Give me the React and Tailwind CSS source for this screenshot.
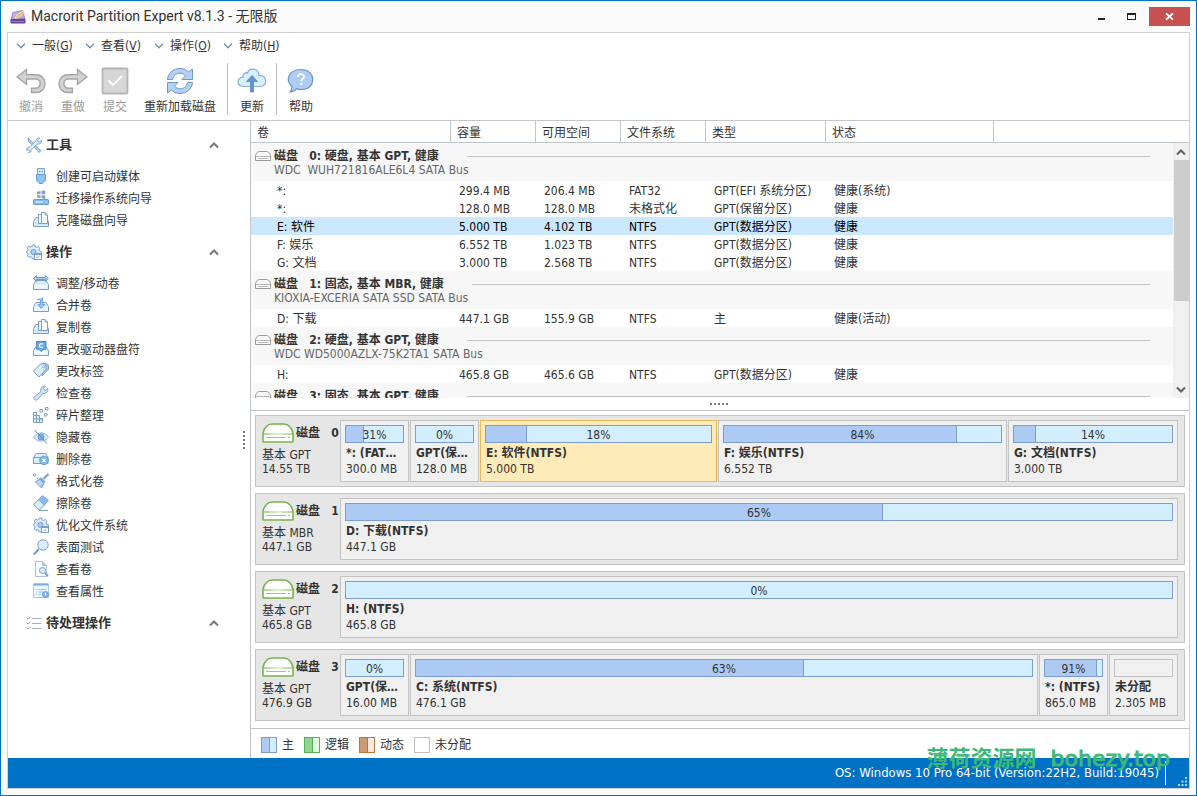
import { Fragment, useState } from 'react';
import clsx from 'clsx';

const MENUS = [
  { label: '一般', key: 'G' },
  { label: '查看', key: 'V' },
  { label: '操作', key: 'O' },
  { label: '帮助', key: 'H' },
];

const TOOLS = [
  { icon: 'usb', label: '创建可启动媒体' },
  { icon: 'migrate', label: '迁移操作系统向导' },
  { icon: 'copy', label: '克隆磁盘向导' },
];

const OPERATIONS = [
  { icon: 'resize', label: '调整/移动卷' },
  { icon: 'merge', label: '合并卷' },
  { icon: 'copy', label: '复制卷' },
  { icon: 'letter', label: '更改驱动器盘符' },
  { icon: 'tag', label: '更改标签' },
  { icon: 'wrench', label: '检查卷' },
  { icon: 'defrag', label: '碎片整理' },
  { icon: 'hide', label: '隐藏卷' },
  { icon: 'remove', label: '删除卷' },
  { icon: 'broom', label: '格式化卷' },
  { icon: 'eraser', label: '擦除卷' },
  { icon: 'gear', label: '优化文件系统' },
  { icon: 'search', label: '表面测试' },
  { icon: 'explore', label: '查看卷' },
  { icon: 'properties', label: '查看属性' },
];

const COLUMNS = ['卷', '容量', '可用空间', '文件系统', '类型', '状态'];

const GROUPS = [
  {
    title: '磁盘\u00a0\u00a0\u00a00: 硬盘, 基本 GPT, 健康',
    model: 'WDC\u00a0\u00a0WUH721816ALE6L4 SATA Bus',
    rows: [
      ['*:', '299.4 MB', '206.4 MB', 'FAT32', 'GPT(EFI 系统分区)', '健康(系统)'],
      ['*:', '128.0 MB', '128.0 MB', '未格式化', 'GPT(保留分区)', '健康'],
      ['E: 软件', '5.000 TB', '4.102 TB', 'NTFS', 'GPT(数据分区)', '健康'],
      ['F: 娱乐', '6.552 TB', '1.023 TB', 'NTFS', 'GPT(数据分区)', '健康'],
      ['G: 文档', '3.000 TB', '2.568 TB', 'NTFS', 'GPT(数据分区)', '健康'],
    ],
  },
  {
    title: '磁盘\u00a0\u00a0\u00a01: 固态, 基本 MBR, 健康',
    model: 'KIOXIA-EXCERIA SATA SSD SATA Bus',
    rows: [['D: 下载', '447.1 GB', '155.9 GB', 'NTFS', '主', '健康(活动)']],
  },
  {
    title: '磁盘\u00a0\u00a0\u00a02: 硬盘, 基本 GPT, 健康',
    model: 'WDC WD5000AZLX-75K2TA1 SATA Bus',
    rows: [['H:', '465.8 GB', '465.6 GB', 'NTFS', 'GPT(数据分区)', '健康']],
  },
  {
    title: '磁盘\u00a0\u00a0\u00a03: 固态, 基本 GPT, 健康',
    model: '',
    rows: [],
  },
];

// grow: share of the free width, 0 keeps the partition at its minimum size
const DISKS = [
  {
    id: 0,
    type: '基本 GPT',
    size: '14.55 TB',
    parts: [
      { name: '*: (FAT32)', size: '300.0 MB', used: 31, grow: 0 },
      { name: 'GPT(保留分区)', size: '128.0 MB', used: 0, grow: 0 },
      { name: 'E: 软件(NTFS)', size: '5.000 TB', used: 18, grow: 227, drive: 'E: 软件' },
      { name: 'F: 娱乐(NTFS)', size: '6.552 TB', used: 84, grow: 279, drive: 'F: 娱乐' },
      { name: 'G: 文档(NTFS)', size: '3.000 TB', used: 14, grow: 160, drive: 'G: 文档' },
    ],
  },
  {
    id: 1,
    type: '基本 MBR',
    size: '447.1 GB',
    parts: [{ name: 'D: 下载(NTFS)', size: '447.1 GB', used: 65, grow: 1, drive: 'D: 下载' }],
  },
  {
    id: 2,
    type: '基本 GPT',
    size: '465.8 GB',
    parts: [{ name: 'H: (NTFS)', size: '465.8 GB', used: 0, grow: 1, drive: 'H:' }],
  },
  {
    id: 3,
    type: '基本 GPT',
    size: '476.9 GB',
    parts: [
      { name: 'GPT(保留分区)', size: '16.00 MB', used: 0, grow: 0 },
      { name: 'C: 系统(NTFS)', size: '476.1 GB', used: 63, grow: 1 },
      { name: '*: (NTFS)', size: '865.0 MB', used: 91, grow: 0 },
      { name: '未分配', size: '2.305 MB', used: null, grow: 0 },
    ],
  },
];

const S = '#7f9fc2'; // icon outline
const L = '#d8eefc'; // light fill
const M = '#a3cdf6'; // mid fill
const D = '#6aa8e8'; // accent fill

const tray = (
  <>
    <path d="M.5 9.5 3 5.500h10l2.500 4v5H.5z" fill={L} stroke={S} />
    <path d="M1.500 10h13v3.500h-13z" fill="#eef8fe" />
  </>
);

const gear = (
  <>
    <path
      d="M6.3 1h2.4l.5 1.8 1.3.6 1.7-.9 1.7 1.7-.9 1.7.5 1.3 1.9.5v2.4l-1.9.5-.5 1.2.9 1.7-1.7 1.7-1.7-.9-1.3.5L8.7 15H6.3l-.5-1.8-1.3-.6-1.7.9-1.6-1.7.9-1.7-.6-1.2-1-.5V7.4l1-.5.6-1.3-.9-1.7 1.6-1.7 1.7.9 1.3-.5z"
      fill={L}
      stroke={S}
    />
    <circle cx="7.5" cy="8" r="2.6" fill={M} stroke={S} />
    <rect x="8.5" y="9.5" width="7" height="6" fill="#fff" stroke={S} />
    <path d="M8.5 10.3h7" stroke={S} strokeWidth="1.6" />
    <path d="m10.3 12.6 1.2 1.3 2.2-2.2" fill="none" stroke={D} />
  </>
);

const ICONS = {
  tools: (
    <>
      <path d="m2 1 .6 3.4 8.8 9 1.6 2.1 2-1.9-2-1.7-8.8-9z" fill={M} stroke={S} strokeWidth=".9" />
      <path
        d="M10 3.5C10.3 1.6 12 .5 13.8 1l-2 2 .4 1.6 1.7.3 1.7-1.8c.3 2-1 3.8-3 4l-1.3-.2-6.1 6.2c.2 1.9-1 2.9-2.9 2.6l1.4-1.5-.6-1.5-2.5.4c-.2-1.8 1-3 2.8-2.9l6.5-6.3z"
        fill={L}
        stroke={S}
        strokeWidth=".9"
      />
    </>
  ),
  gear,
  pending: (
    <>
      <path d="m.7 2.7 1.4 1.4L4.6 1.6M.7 7.7l1.4 1.4 2.5-2.5M.7 12.7l1.4 1.4 2.5-2.5" fill="none" stroke={S} />
      <path d="M6 3.5h9.5M6 8.5h9.5M6 13.5h9.5" stroke="#9eb0c2" />
    </>
  ),
  usb: (
    <>
      <path d="M4.5.5h7v6h-7z" fill={L} stroke={S} />
      <path d="M6 3.5h1.4M8.6 3.5H10" stroke={S} strokeWidth="1.6" />
      <path d="M3.5 6.500h9V12q-.2 1.500-2 2l-1 .5v1h-3v-1l-1-.5q-1.800-.5-2-2z" fill="#8cc3f7" stroke="#689cd6" />
    </>
  ),
  migrate: (
    <>
      <path d="M4 1.8 7.5 1v3.2H4zM8.5.9 12.3.2v4H8.5zM4 5.2h3.5v3L4 7.5zM8.5 5.2h3.8V9L8.5 8.3z" fill="#86a3bf" />
      <rect x=".5" y="9.5" width="15" height="5" rx=".6" fill="#7fbcf5" stroke="#689cd6" />
      <path d="M2.5 12h7.5M12.5 12h1" stroke="#fff" />
    </>
  ),
  copy: (
    <>
      <path d="M.5 9.5 3 5.5h10l2.500 4v5H.5z" fill={L} stroke={S} />
      <path d="M2 10.500h12v3H2z" fill="#cfe7fa" />
      <path d="M5.500 2.500h5v9h-5z" fill="#e9f6fe" stroke={S} />
      <path d="M8.500.5h3.500l2.500 2.500v8.500h-6z" fill="#fff" stroke={S} />
      <path d="M12 .5V3h2.500" fill="none" stroke={S} />
    </>
  ),
  resize: (
    <>
      {tray}
      <path d="m.6 3.500 3-3v2h8.800v-2l3 3-3 3v-2H3.600v2z" fill={M} stroke="#6f97c4" />
    </>
  ),
  merge: (
    <>
      {tray}
      <path d="M4 2.500h3.400v5H5l3.300 4 3.300-4H9.400v-7" fill={M} stroke="#689cd6" />
    </>
  ),
  letter: (
    <>
      {tray}
      <path d="M3.5.5h9.500v7.500l-3 .5-1.800 2-1.800-2-2.900-.5z" fill="#68a8ec" stroke="#4f86c4" />
      <path d="M10 2.800H7.600L6.500 3.700v1.800l1.100.9H10" fill="none" stroke="#fff" strokeWidth="1.200" />
    </>
  ),
  tag: (
    <>
      <path d="M9.500.5 14 1l1.500 1.200v4L9 13z" fill={M} stroke={S} />
      <path d="m.5 8 7.200-7.200 4.900.3.6 4.900L5.900 14z" fill={L} stroke={S} />
      <circle cx="10.500" cy="3.700" r="1" fill="#fff" stroke={S} strokeWidth=".8" />
    </>
  ),
  wrench: (
    <path
      d="M7.800 6.800c-.9-3 1.500-5.900 4.500-5.700L10.600 3l.3 1.900 2 .4 1.900-1.800c.7 3.100-2 5.500-4.800 4.800L4.400 14.500c-1.800 1.700-4.600-.6-3-2.700z"
      fill="#cfe7fb"
      stroke={S}
    />
  ),
  defrag: (
    <>
      <path d="M.5 5.500h3v3h3v3h3v4h-9z" fill={L} stroke={S} />
      <path d="M.5 8.500h3v7M.5 12h9M6.500 11v4.500" fill="none" stroke={S} />
      <path d="M7 2.500h2.500V5H7zM12.500.5H15V3h-2.500zM11.500 6.500H14V9h-2.500z" fill="#fff" stroke={S} />
    </>
  ),
  hide: (
    <>
      <path d="M.5 8C4.500 2.500 11.500 2.500 15.500 8 11.500 13.500 4.500 13.500.5 8z" fill={L} stroke="#98b4cf" />
      <circle cx="8" cy="8" r="3" fill="#78b4f1" stroke="#689cd6" />
      <path d="m1.500 1 12.500 13.500" stroke="#6c849c" />
    </>
  ),
  remove: (
    <>
      <path d="M.5 6.500 3 2.500h9.500l2.500 4v6H.5z M.5 6.500h15" fill={L} stroke={S} />
      <circle cx="11" cy="9.500" r="4.300" fill="#7cb8f5" stroke="#689cd6" />
      <path d="m9.500 8 3 3m0-3-3 3" stroke="#fff" strokeWidth="1.300" />
    </>
  ),
  broom: (
    <>
      <path d="m15.500 1-5 5" stroke={S} strokeWidth="2.200" />
      <path d="m8 4.500 4 4-1 1.500-4.500-4z" fill={D} stroke={S} strokeWidth=".6" />
      <path d="M6.500 6 11 10.500 8.500 15 2.500 9z" fill={M} stroke={S} />
      <path d="m4 10 4-2M6 12l3-3" stroke={L} />
      <circle cx="1.500" cy="2" r="1.200" fill="none" stroke={S} />
      <path d="M3.500 5.500h1.500" stroke={S} />
    </>
  ),
  eraser: (
    <>
      <path d="m.8 9.500 8.700-8.700 5.700 4.700-8 9-2.700-.5z" fill={L} stroke={S} />
      <path d="m5.500 4.800 4-4 5.700 4.700-4 4.500z" fill="#84bcf5" stroke={S} strokeWidth=".8" />
      <path d="M6 15.500h9" stroke={S} />
    </>
  ),
  search: (
    <>
      <path d="m.8 15.200 5-5" stroke="#7399c8" strokeWidth="2" />
      <circle cx="10" cy="6" r="5.200" fill={L} stroke={S} />
    </>
  ),
  explore: (
    <>
      <path d="M2.500.5h7l4 4v11h-11z" fill="#f7fbfe" stroke="#a8c0d8" />
      <path d="M9.500.5v4h4" fill={M} stroke="#a8c0d8" />
      <circle cx="9.500" cy="9.500" r="3" fill={L} stroke={S} />
      <path d="m12 12 3 3" stroke="#689cd6" strokeWidth="1.800" />
    </>
  ),
  properties: (
    <>
      <path d="M.5 1h15v13.500H.5z" fill="#eaf6fe" stroke={M} />
      <path d="M.5 1.500h15" stroke="#7fa9dc" strokeWidth="2" />
      <path d="M3 6.500h1M5.500 6.500H13M3 9h1M5.500 9H10M3 11.500h1M5.500 11.500H8" stroke="#9dc0e4" />
      <circle cx="12.500" cy="11.500" r="3" fill="#78b4f1" stroke="#689cd6" />
      <path d="M12.500 9.500v3" stroke="#fff" strokeWidth="1.200" />
    </>
  ),
};

function Icon({ name }) {
  return (
    <svg viewBox="0 0 16 16" className="size-4 shrink-0" aria-hidden="true">
      {ICONS[name]}
    </svg>
  );
}

function Chevron({ up, className }) {
  return (
    <svg viewBox="0 0 10 6" className={clsx('h-1.5 w-2.5 shrink-0', className)} fill="none" aria-hidden="true">
      <path d={up ? 'M1 5.500 5 1.500l4 4' : 'm1 .8 4 4 4-4'} stroke="currentColor" strokeWidth={up ? 2 : 1.3} />
    </svg>
  );
}

function GrayDisk() {
  return (
    <svg viewBox="0 0 16 10" className="h-2.5 w-4 shrink-0" aria-hidden="true">
      <path d="M.5 9.500v-5Q1 2.500 2.500 1.200 3.200.5 4.500.5h7q1.300 0 2 .7Q15 2.500 15.500 4.500v5z" fill="#fafafa" stroke="#999" />
      <path d="M1 5.500h14M3 7.500h10" stroke="#b5b5b5" />
    </svg>
  );
}

function GreenDisk() {
  return (
    <svg viewBox="0 0 32 20" className="h-5 w-8 shrink-0" aria-hidden="true">
      <defs>
        <linearGradient id="band">
          <stop offset="0" stopColor="#8fc462" />
          <stop offset=".5" stopColor="#d5eac3" />
          <stop offset="1" stopColor="#8fc462" />
        </linearGradient>
      </defs>
      <path
        d="M1 18.500V11q.3-4.500 3.500-7.500Q6.500 1 10 1h12q3.500 0 5.500 2.500 3.200 3 3.500 7.500v7.500q0 .5-.5.5h-29q-.5 0-.5-.5z"
        fill="#fff"
        stroke="#79b34b"
        strokeWidth="1.600"
      />
      <path d="M2 10h28v2H2z" fill="url(#band)" opacity=".7" />
      <path d="M4 14.500h20M26 14.500h2" stroke="#9ccb75" strokeWidth="1.200" />
    </svg>
  );
}

function AppLogo() {
  return (
    <svg viewBox="0 0 16 16" className="size-4 shrink-0" aria-hidden="true">
      <path d="M2.800 3.500 12.800 1.500 15 11 1 12z" fill="#c3b0da" stroke="#8d72b0" strokeWidth=".8" />
      <path d="m5 9.500 1.500-3L12.500 2l1.500 1.800-6 5.200z" fill="#f2c25a" stroke="#fff" strokeWidth=".5" />
      <path d="M.8 10 15 9.500l.8 3.500-1 1.500H1.200L.3 13z" fill="#6d429b" />
      <path d="M1.500 12.500h12.500" stroke="#a98ac9" strokeWidth=".8" />
    </svg>
  );
}

function UndoIcon({ flip }) {
  return (
    <svg viewBox="0 0 30 26" className={clsx('h-[26px] w-[30px]', flip && '-scale-x-100')} aria-hidden="true">
      <path
        d="M1 9 10.500 1.500v5.300H20c12 0 12 17.700 0 17.700h-4.500v-4.300H20c5.500-.3 5.500-9 0-9.200h-9.500v5.300z"
        fill="#d3d3d3"
        stroke="#a6a6a6"
        strokeWidth="1.400"
      />
    </svg>
  );
}

function SubmitIcon() {
  return (
    <svg viewBox="0 0 28 28" className="size-7" aria-hidden="true">
      <rect x="1.500" y="1.500" width="25" height="25" rx="1" fill="#d6d6d6" stroke="#b4b4b4" strokeWidth="1.800" />
      <path d="m7.500 13.500 4.500 4.500 9-9" fill="none" stroke="#fff" strokeWidth="1.800" />
    </svg>
  );
}

function ReloadIcon() {
  const arrow = (
    <path
      d="M1.500 12.500C2 6 7.500 1.500 14 1.500c3.600 0 6.500 1.300 8.600 3.600L26.500 2v10.500H16l3.500-3.600C18 7 16.200 6.200 14 6.200c-4 0-6.500 2.300-7.500 6.300z"
      fill="#b4d0f5"
      stroke="#6f97c8"
    />
  );
  return (
    <svg viewBox="0 0 28 28" className="size-7" aria-hidden="true">
      {arrow}
      <g transform="rotate(180 14 14)">{arrow}</g>
    </svg>
  );
}

function UpdateIcon() {
  return (
    <svg viewBox="0 0 30 26" className="h-[26px] w-[30px]" aria-hidden="true">
      <path
        d="M7 18.500C-1 18.500-.5 9 6 9.200 5.500 5 9.500 4 10.500 5 12-.5 21.500-.5 22 7.500c8-1 9.500 11 1 11z"
        fill="#d8effd"
        stroke="#88add6"
        strokeWidth="1.200"
      />
      <path d="m15 7.500 5.500 6h-4V24h-3V13.500h-4z" fill="#6593cf" stroke="#5585be" strokeWidth=".8" />
    </svg>
  );
}

function HelpIcon() {
  return (
    <svg viewBox="0 0 28 26" className="h-[26px] w-7" aria-hidden="true">
      <path
        d="M14 1.500c15.500 0 15.500 20 1 20-2 0-4-.2-5.500-.8-1.500 2-4 3.300-6.500 3.300 1.500-1.500 2-3 2-5.500C-2 12.500 1.500 1.500 14 1.500z"
        fill="#aecdf5"
        stroke="#6b93c6"
        strokeWidth="1.200"
      />
      <path d="M11 9c0-4 6.500-3.500 6 0-.3 1.800-2.700 2-2.700 4.300" fill="none" stroke="#fff" strokeWidth="1.800" />
      <path d="M13.300 15h2v2h-2z" fill="#fff" />
    </svg>
  );
}

function ToolButton({ icon, label, disabled, wide }) {
  return (
    <button
      type="button"
      disabled={disabled}
      className={clsx(
        'flex flex-col items-center justify-between disabled:text-[#9b9b9b]',
        wide ? 'w-[88px]' : 'w-[42px]'
      )}
    >
      <span className="flex h-9 items-center">{icon}</span>
      <span className="leading-4 whitespace-nowrap">{label}</span>
    </button>
  );
}

function SideSection({ icon, title, items = [] }) {
  const [open, setOpen] = useState(true);
  return (
    <section className="pb-[11px]">
      <button
        type="button"
        onClick={() => setOpen(!open)}
        className="flex h-5 w-full items-center pr-[31px] pl-[18px] text-[13px] font-bold"
      >
        <Icon name={icon} />
        <span className="ml-1 flex-1 text-left">{title}</span>
        <Chevron up={open} className="text-[#777]" />
      </button>
      {open && items.length > 0 && (
        <ul className="mt-2.5">
          {items.map((item) => (
            <li key={item.label}>
              <button type="button" className="flex h-[22px] items-center gap-[7px] pl-[25px]">
                <Icon name={item.icon} />
                <span className="pt-0.5">{item.label}</span>
              </button>
            </li>
          ))}
        </ul>
      )}
    </section>
  );
}

function VolumeTable({ selected, onSelect }) {
  return (
    <div className="relative min-h-0 flex-1 overflow-hidden">
      <table className="w-full table-fixed border-collapse">
        <colgroup>
          <col className="w-[200px]" />
          <col className="w-[85px]" />
          <col className="w-[85px]" />
          <col className="w-[85px]" />
          <col className="w-[120px]" />
          <col className="w-[168px]" />
          <col />
        </colgroup>
        <thead>
          <tr className="h-[22px] shadow-[inset_0_-1px_#bfc6cc]">
            {COLUMNS.map((c) => (
              <th key={c} className="p-0 pt-0.5 pl-1.5 text-left font-normal shadow-[inset_-1px_0_#bfc6cc]">
                {c}
              </th>
            ))}
            <td />
          </tr>
        </thead>
        <tbody>
          {GROUPS.map((g) => (
            <Fragment key={g.title}>
              <tr className="bg-[#f7f7f7]">
                <td colSpan={7} className="h-[38px] p-0 pr-[39px] pl-1 align-top">
                  <div className="mt-[5px] flex h-4 items-center">
                    <GrayDisk />
                    <span className="ml-[3px] font-bold whitespace-nowrap">{g.title}</span>
                    <span className="ml-7 h-px flex-1 bg-[#c6c6c6]" />
                  </div>
                  <div className="h-3 pl-[19px] leading-3 text-[#666]">{g.model}</div>
                </td>
              </tr>
              {g.rows.map((row, i) => {
                const isSelected = row[0] === selected;
                return (
                  <tr
                    key={i}
                    onClick={() => onSelect(row[0])}
                    className={clsx('h-[18px]', isSelected && 'bg-[#cce8ff] text-black')}
                  >
                    {row.map((cell, j) => (
                      <td
                        key={j}
                        className={clsx('p-0 pt-0.5 leading-4 whitespace-nowrap', j === 0 ? 'pl-[26px]' : 'pl-2')}
                      >
                        {cell}
                      </td>
                    ))}
                    <td />
                  </tr>
                );
              })}
            </Fragment>
          ))}
        </tbody>
      </table>

      {/* Scrollbar */}
      <div className="absolute top-[22px] right-0 bottom-0 flex w-4 flex-col items-center bg-[#f0f0f0] text-[#606060]">
        <div className="flex h-[17px] items-center">
          <Chevron up />
        </div>
        <div className="h-[141px] w-[15px] bg-[#cdcdcd]" />
        <div className="mt-auto flex h-[17px] items-center">
          <Chevron up className="rotate-180" />
        </div>
      </div>
    </div>
  );
}

function UsageBar({ used }) {
  if (used === null) {
    return <div className="h-[18px] border border-[#c0c0c0] bg-[#f0f0f0]" />;
  }
  return (
    <div className="relative h-[18px] border border-[#7c9fcf] bg-[#d2eeff]">
      {used > 0 && <div className="h-full border-r border-[#7c9fcf] bg-[#adcaf4]" style={{ width: `${used}%` }} />}
      <span className="absolute inset-0 text-center leading-[18px]">{used}%</span>
    </div>
  );
}

function Partition({ part, selected, onSelect }) {
  return (
    <button
      type="button"
      onClick={() => part.drive && onSelect(part.drive)}
      style={part.grow ? { flex: `${part.grow} 1 0px` } : undefined}
      className={clsx(
        'h-[62px] border p-1 text-left',
        part.grow ? 'min-w-0' : 'w-[69px] shrink-0',
        selected ? 'border-[#eab95a] bg-[#ffebb8]' : 'border-[#c3c3c3] bg-[#f0f0f0]'
      )}
    >
      <UsageBar used={part.used} />
      <div className="mt-0.5 truncate pr-0.5 pl-px leading-4 font-bold">{part.name}</div>
      <div className="pl-px leading-4 whitespace-nowrap">{part.size}</div>
    </button>
  );
}

function DiskCard({ disk, selected, onSelect }) {
  return (
    <div className="flex h-[72px] border border-[#c3c3c3] bg-[#e6e6e6] py-1 pr-1.5">
      <div className="w-[84px] shrink-0 pl-1.5">
        <div className="mt-[3px] flex h-5 items-center gap-0.5">
          <GreenDisk />
          <span className="font-bold whitespace-nowrap">磁盘&nbsp;&nbsp;&nbsp;{disk.id}</span>
        </div>
        <div className="mt-[5px] leading-[14px]">{disk.type}</div>
        <div className="leading-[14px]">{disk.size}</div>
      </div>
      <div className="flex min-w-0 flex-1 gap-px">
        {disk.parts.map((p) => (
          <Partition
            key={p.name}
            part={p}
            selected={Boolean(p.drive) && p.drive === selected}
            onSelect={onSelect}
          />
        ))}
      </div>
    </div>
  );
}

function Swatch({ left, right, border }) {
  return (
    <span className={clsx('flex size-4 border', border)}>
      <span className={clsx('flex-1', left)} />
      <span className={clsx('flex-1', right)} />
    </span>
  );
}

function Legend() {
  return (
    <div className="flex h-[30px] items-center gap-2.5 border-t border-[#c3c3c3] pt-0.5 pl-2.5">
      <span className="flex items-center gap-[5px]">
        <Swatch border="border-[#7c9fcf]" left="border-r border-[#7c9fcf] bg-[#adcaf4]" right="bg-[#d2eeff]" />主
      </span>
      <span className="flex items-center gap-[5px]">
        <Swatch border="border-[#55b355]" left="border-r border-[#55b355] bg-[#94d294]" right="bg-[#e0fbe0]" />
        逻辑
      </span>
      <span className="flex items-center gap-[5px]">
        <Swatch border="border-[#b87640]" left="border-r border-[#b87640] bg-[#cb9b74]" right="bg-[#f7ebe1]" />
        动态
      </span>
      <span className="flex items-center gap-[5px]">
        <Swatch border="border-[#c0c0c0]" />
        未分配
      </span>
    </div>
  );
}

export default function App() {
  const [selected, setSelected] = useState('E: 软件');

  return (
    <div className="relative flex h-screen flex-col overflow-hidden border border-[#0072c6] bg-[#fbfbfb] px-1.5 pb-1.5 font-['DejaVu_Sans_Condensed','Noto_Sans','Noto_Sans_CJK_SC',sans-serif] text-[12px] text-[#333]">
      {/* Title bar */}
      <header className="flex h-[31px] shrink-0 items-center pl-[3px]">
        <AppLogo />
        <h1 className="ml-[5px] flex-1 font-['Roboto','Noto_Sans_CJK_SC',sans-serif] text-[14px]">
          Macrorit Partition Expert v8.1.3 - 无限版
        </h1>
        <button type="button" aria-label="最小化" className="flex h-5 w-[30px] items-center justify-center">
          <span className="mt-1 h-0.5 w-[7px] bg-[#222]" />
        </button>
        <button type="button" aria-label="最大化" className="flex h-5 w-[30px] items-center justify-center">
          <span className="h-[7px] w-[9px] border border-t-2 border-[#222]" />
        </button>
        <button
          type="button"
          aria-label="关闭"
          className="ml-[3px] flex h-[19px] w-[41px] items-center justify-center bg-[#c75050]"
        >
          <svg viewBox="0 0 9 7" className="h-[7px] w-[9px]" aria-hidden="true">
            <path d="m1 .3 7 6.400M8 .3 1 6.700" stroke="#fff" strokeWidth="1.800" />
          </svg>
        </button>
      </header>

      <div className="flex min-h-0 flex-1 flex-col border border-[#d0d0d0] bg-white">
        {/* Menu */}
        <nav className="flex h-[26px] shrink-0 items-center gap-[11px] pl-2">
          {MENUS.map((m) => (
            <button key={m.key} type="button" className="flex w-[58px] items-center gap-1.5 whitespace-nowrap">
              <Chevron className="text-[#6f8cad]" />
              <span>
                {m.label}(<u>{m.key}</u>)
              </span>
            </button>
          ))}
        </nav>

        {/* Toolbar */}
        <div className="flex h-[62px] shrink-0 border-b border-[#c6c6c6] pt-1 pb-[5px] pl-0.5">
          <ToolButton icon={<UndoIcon />} label="撤消" disabled />
          <ToolButton icon={<UndoIcon flip />} label="重做" disabled />
          <ToolButton icon={<SubmitIcon />} label="提交" disabled />
          <ToolButton icon={<ReloadIcon />} label="重新加载磁盘" wide />
          <span className="mx-[3px] w-px bg-[#bdbdbd]" />
          <ToolButton icon={<UpdateIcon />} label="更新" />
          <span className="mx-[3px] w-px bg-[#bdbdbd]" />
          <ToolButton icon={<HelpIcon />} label="帮助" />
        </div>

        <div className="flex min-h-0 flex-1">
          <aside className="relative w-[243px] shrink-0 border-r border-[#bfc6cc] pt-3.5">
            <SideSection icon="tools" title="工具" items={TOOLS} />
            <SideSection icon="gear" title="操作" items={OPERATIONS} />
            <SideSection icon="pending" title="待处理操作" />
            {/* Splitter grip */}
            <div className="absolute top-1/2 right-[5px] h-[18px] w-0.5 -translate-y-1/2 bg-[repeating-linear-gradient(#777_0_2px,transparent_2px_4px)]" />
          </aside>

          <main className="flex min-w-0 flex-1 flex-col">
            <VolumeTable selected={selected} onSelect={setSelected} />
            <div className="flex h-3 shrink-0 items-center justify-center">
              <div className="mr-0.5 h-0.5 w-[18px] bg-[repeating-linear-gradient(90deg,#777_0_2px,transparent_2px_4px)]" />
            </div>
            <div className="flex shrink-0 flex-col gap-1.5 border-t border-[#bfc6cc] pt-1 pr-1 pb-[7px] pl-1">
              {DISKS.map((d) => (
                <DiskCard key={d.id} disk={d} selected={selected} onSelect={setSelected} />
              ))}
            </div>
            <Legend />
          </main>
        </div>

        <footer className="flex h-[30px] shrink-0 items-center justify-end bg-[#0072c6] text-[13px] text-white">
          <span>OS: Windows 10 Pro 64-bit (Version:22H2, Build:19045)</span>
          <span className="ml-1.5 h-6 w-px bg-white" />
          <svg viewBox="0 0 9 9" className="mr-0.5 mb-0.5 ml-3 size-[9px] self-end" fill="#b9cfe4" aria-hidden="true">
            <path d="M7 0h2v2H7zM3.500 3.500h2v2h-2zM7 3.500h2v2H7zM0 7h2v2H0zM3.500 7h2v2h-2zM7 7h2v2H7z" />
          </svg>
        </footer>
      </div>

      {/* Watermark */}
      <div className="pointer-events-none absolute right-[26px] bottom-5 flex items-center gap-3.5 font-['DejaVu_Sans','Noto_Sans_CJK_SC',sans-serif] text-[22px] leading-8 text-[#3cb878]">
        <span className="font-bold">薄荷资源网</span>
        <span className="[-webkit-text-stroke:1px_#3cb878]">bohezy.top</span>
      </div>
    </div>
  );
}
